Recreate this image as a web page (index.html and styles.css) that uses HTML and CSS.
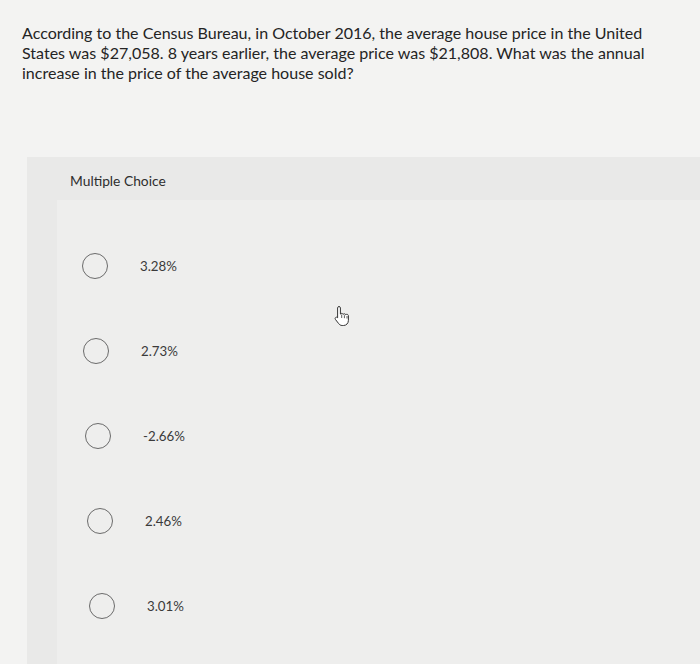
FILE: index.html
```html
<!DOCTYPE html>
<html>
<head>
<meta charset="utf-8">
<link rel="stylesheet" href="styles.css">
</head>
<body>
<div class="page">
  <p class="question">According to the Census Bureau, in October 2016, the average house price in the United States was $27,058. 8 years earlier, the average price was $21,808. What was the annual increase in the price of the average house sold?</p>
  <section class="panel">
    <div class="panel-head">Multiple Choice</div>
    <div class="panel-body">
      <ul class="options">
        <li class="option"><span class="radio"></span><span class="label">3.28%</span></li>
        <li class="option"><span class="radio"></span><span class="label">2.73%</span></li>
        <li class="option"><span class="radio"></span><span class="label">-2.66%</span></li>
        <li class="option"><span class="radio"></span><span class="label">2.46%</span></li>
        <li class="option"><span class="radio"></span><span class="label">3.01%</span></li>
      </ul>
      <svg class="cursor" width="18" height="22" viewBox="0 0 18 22">
        <path d="M6 1.5c0.8 0 1.4 0.6 1.4 1.4v6.2c0.3-0.5 0.8-0.7 1.3-0.7 0.7 0 1.2 0.4 1.4 1 0.3-0.4 0.8-0.6 1.3-0.6 0.7 0 1.2 0.4 1.4 1 0.3-0.3 0.7-0.5 1.1-0.5 0.9 0 1.5 0.7 1.5 1.6v4.5c0 2.8-2 5.1-4.9 5.1H9.2c-1.6 0-2.7-0.8-3.6-2L2.4 14.4c-0.5-0.7-0.3-1.6 0.4-2 0.6-0.4 1.400-0.2 1.9 0.4l-0.1 0V2.9C4.6 2.1 5.2 1.5 6 1.5z" fill="#fff" stroke="#333" stroke-width="1"/>
        <path d="M8.7 9.5v3.5M11.4 10.2v3M14 11v2.5" stroke="#333" stroke-width="0.8" fill="none"/>
      </svg>
    </div>
  </section>
</div>
</body>
</html>
```
FILE: styles.css
```css
html, body {
  margin: 0;
  padding: 0;
}
body {
  background: #f3f3f2;
  font-family: "Lato", "Open Sans", sans-serif;
  color: #262626;
  width: 700px;
  height: 664px;
  overflow: hidden;
}
.page {
  padding: 23px 0 0 22px;
}
.question {
  margin: 0;
  width: 660px;
  font-size: 16.05px;
  line-height: 20px;
  color: #242424;
}
.panel {
  margin-top: 74px;
  margin-left: 5px;
  background: #e9e9e8;
}
.panel-head {
  height: 43px;
  padding: 15px 0 0 43px;
  box-sizing: border-box;
  font-size: 13.8px;
  color: #2e2e2e;
}
.panel-body {
  position: relative;
  margin-left: 30px;
  background: #eeeeed;
  padding: 52px 0 60px 0;
  height: 464px;
  box-sizing: border-box;
}
.options {
  list-style: none;
  margin: 0;
  padding: 0;
  display: flex;
  flex-direction: column;
  gap: 57px;
}
.option {
  display: flex;
  align-items: center;
  height: 28px;
  padding-left: 25px;
}
.option:nth-child(2) { padding-left: 26px; }
.option:nth-child(3) { padding-left: 28px; }
.option:nth-child(4) { padding-left: 30px; }
.option:nth-child(5) { padding-left: 32px; }
.radio {
  width: 26px;
  height: 26px;
  border: 1.5px solid #6b6b6b;
  border-radius: 50%;
  box-sizing: border-box;
  flex: none;
}
.label {
  margin-left: 32px;
  font-size: 13.3px;
  color: #3a3a3a;
}
.cursor {
  position: absolute;
  left: 276px;
  top: 105px;
}
```
